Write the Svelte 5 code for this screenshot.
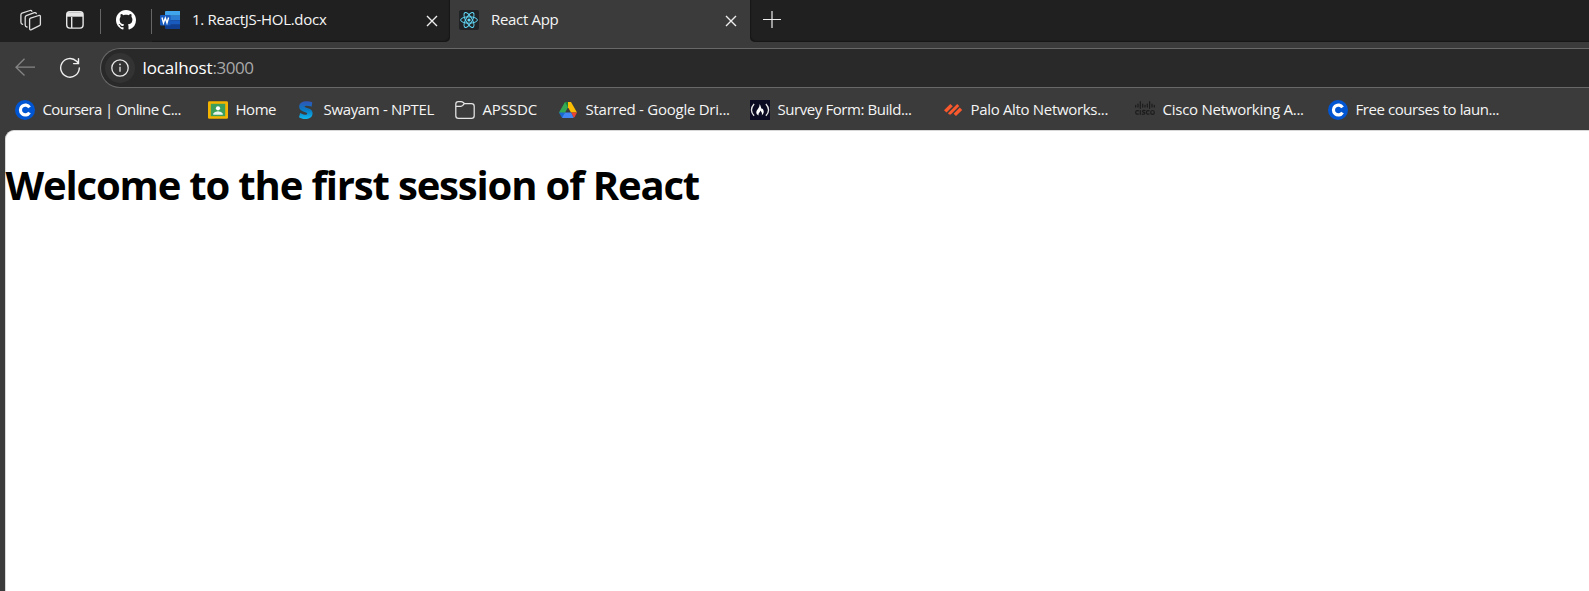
<script>
  const bookmarks = [
    { icon: 'coursera', label: 'Coursera | Online C...', slot: 193, text: 138.3 },
    { icon: 'classroom', label: 'Home', slot: 88, text: 40.5 },
    { icon: 'swayam', label: 'Swayam - NPTEL', slot: 159, text: 110.5 },
    { icon: 'folder', label: 'APSSDC', slot: 103, text: 54.5 },
    { icon: 'drive', label: 'Starred - Google Dri...', slot: 192, text: 144.3 },
    { icon: 'fcc', label: 'Survey Form: Build...', slot: 193, text: 134 },
    { icon: 'palo', label: 'Palo Alto Networks...', slot: 192, text: 137.5 },
    { icon: 'cisco', label: 'Cisco Networking A...', slot: 193, text: 141.3 },
    { icon: 'coursera', label: 'Free courses to laun...', slot: 193, text: 143.5 }
  ];

  // Tracks a label out or in so that it takes the given width.
  function fit(node, width) {
    const natural = node.getBoundingClientRect().width;
    node.style.letterSpacing = `${(width - natural) / node.textContent.length}px`;
  }
</script>

<div class="browser">
  <div class="tabstrip">
    <div class="pinned">
      <svg class="workspaces" width="24" height="24" viewBox="0 0 24 24" fill="none" stroke="#dedede" stroke-width="1.3" stroke-linejoin="round" stroke-linecap="round">
        <path d="M10.6 11.6Q10.6 10.5 11.6 10.1L19.8 7.5Q21.4 7.1 21.4 8.6V16.2Q21.4 17.3 20.4 17.7L12.4 21.6Q10.6 22.3 10.6 20.6Z" />
        <path d="M8 19Q6.2 18.6 6.2 17V9.3Q6.2 8.1 7.3 7.6L15.4 4.7Q16.8 4.3 17.3 5.6" />
        <path d="M3.6 16.4Q1.9 15.8 1.9 14.2V6.8Q1.9 5.6 3 5.1L11 2.5Q12.4 2.1 12.9 3.2" />
      </svg>
      <svg class="actions" width="20" height="20" viewBox="0 0 20 20" fill="none" stroke="#e6e6e6" stroke-width="1.4">
        <rect x="1.7" y="1.7" width="16.4" height="16.4" rx="3" />
        <path d="M2 4.5h16" stroke-width="4.4" />
        <path d="M6.7 7v11" />
      </svg>
    </div>
    <span class="divider"></span>
    <svg class="github" width="20" height="20" viewBox="0 0 16 16"><path fill="#fff" d="M8 0C3.58 0 0 3.58 0 8c0 3.54 2.29 6.53 5.47 7.59.4.07.55-.17.55-.38 0-.19-.01-.82-.01-1.49-2.01.37-2.53-.49-2.69-.94-.09-.23-.48-.94-.82-1.13-.28-.15-.68-.52-.01-.53.63-.01 1.08.58 1.23.82.72 1.21 1.87.87 2.33.66.07-.52.28-.87.51-1.07-1.78-.2-3.64-.89-3.64-3.95 0-.87.31-1.59.82-2.15-.08-.2-.36-1.02.08-2.12 0 0 .67-.21 2.2.82.64-.18 1.32-.27 2-.27s1.36.09 2 .27c1.53-1.04 2.2-.82 2.2-.82.44 1.1.16 1.92.08 2.12.51.56.82 1.27.82 2.15 0 3.07-1.87 3.75-3.65 3.95.29.25.54.73.54 1.48 0 1.07-.01 1.93-.01 2.2 0 .21.15.46.55.38A8.01 8.01 0 0 0 16 8c0-4.42-3.58-8-8-8Z" /></svg>
    <span class="divider"></span>
    <div class="tab word">
      <svg width="20" height="20" viewBox="0 0 20 20">
        <path fill="#41a5ee" d="M5 2Q5 1 6 1H20V5.7H5Z" />
        <path fill="#2b7cd3" d="M5 5.6H20V10.3H5Z" />
        <path fill="#185abd" d="M5 10.2H20V14.8H5Z" />
        <path fill="#103f91" d="M5 14.6H20V19H6Q5 19 5 18Z" />
        <rect y="5" width="10.6" height="10.4" rx="1" fill="#185abd" />
        <path d="m2 7.5 1.5 5.5L5.3 8 7 13 8.6 7.5" stroke="#fff" stroke-width="1.4" fill="none" />
      </svg>
      <span class="title"><span use:fit={134.5}>1. ReactJS-HOL.docx</span></span>
      <svg class="close" width="12" height="12" viewBox="0 0 12 12"><path d="m1 1 10 10M11 1 1 11" stroke="#eee" stroke-width="1.4" /></svg>
    </div>
    <div class="tab active">
      <svg width="20" height="20" viewBox="0 0 20 20" fill="none" stroke="#61dafb" stroke-width=".95">
        <rect width="20" height="20" rx="2" fill="#202225" stroke="none" />
        <ellipse cx="10" cy="10" rx="8.4" ry="3.2" />
        <ellipse cx="10" cy="10" rx="8.4" ry="3.2" transform="rotate(60 10 10)" />
        <ellipse cx="10" cy="10" rx="8.4" ry="3.2" transform="rotate(120 10 10)" />
        <circle cx="10" cy="10" r="1.6" fill="#61dafb" stroke="none" />
      </svg>
      <span class="title"><span use:fit={67.5}>React App</span></span>
      <svg class="close" width="12" height="12" viewBox="0 0 12 12"><path d="m1 1 10 10M11 1 1 11" stroke="#eee" stroke-width="1.4" /></svg>
    </div>
    <div class="rest">
      <svg width="18" height="18" viewBox="0 0 18 18"><path d="M9 0v17M0 8.5h18" stroke="#eee" stroke-width="1.2" /></svg>
    </div>
  </div>

  <div class="toolbar">
    <svg class="back" width="20" height="18" viewBox="0 0 20 18" fill="none" stroke="#858585" stroke-width="1.3"><path d="M20 9.2H1M9.5.7 1 9.2l8.5 8.3" /></svg>
    <svg class="reload" width="22" height="22" viewBox="0 0 22 22" fill="none" stroke="#f0f0f0" stroke-width="1.4" stroke-linecap="round"><path d="M20.3 11A9.3 9.3 0 1 1 17.6 4.3L19.4 6.2M19.5 1.8v4.8h-4.9" /></svg>
    <div class="address">
      <span class="info">
        <svg width="18" height="18" viewBox="0 0 18 18"><circle cx="9" cy="9" r="8.2" fill="none" stroke="#e8e8e8" stroke-width="1.3" /><path d="M9 7.8v5" stroke="#e8e8e8" stroke-width="1.3" /><circle cx="9" cy="5.4" r=".9" fill="#e8e8e8" /></svg>
      </span>
      <span class="url"><span use:fit={70}>localhost</span><span class="port" use:fit={41}>:3000</span></span>
    </div>
  </div>

  <div class="bookmarks">
    {#each bookmarks as b}
      <div class="bookmark" style:width="{b.slot}px">
        <svg width="20" height="20" viewBox="0 0 20 20">
          {#if b.icon === 'coursera'}
            <circle cx="10" cy="10" r="10" fill="#0056d2" />
            <path d="M14.5 7.4A4.9 4.9 0 1 0 14.5 12.6" fill="none" stroke="#fff" stroke-width="3.2" />
          {:else if b.icon === 'classroom'}
            <rect y="1.2" width="20" height="17.6" rx="1.3" fill="#f4b400" />
            <rect x="2.8" y="3.8" width="14.4" height="12.4" fill="#3d9f5b" />
            <circle cx="10" cy="8.3" r="2.1" fill="#fff" />
            <path d="M5.2 14.7V13.6Q6.4 11.4 10 11.3 13.6 11.4 14.8 13.6V14.7Z" fill="#e9f4ec" />
          {:else if b.icon === 'swayam'}
            <defs><linearGradient id="swayam" x2="0" y2="1"><stop stop-color="#3154b5" /><stop offset=".5" stop-color="#087cc5" /><stop offset="1" stop-color="#12b9ed" /></linearGradient></defs>
            <path d="M16.3 2.2 15.7 6.4Q9.5 5 8.6 6.2C8 8.2 16.8 7.3 16.6 13.3 16.4 20 7.2 20.3 3 17.3L4.2 12.9Q10.7 16.2 11.3 13.7C11.3 11.6 3.2 12.1 3.2 6.7 3.2 1.2 10.7.4 16.3 2.2Z" fill="url(#swayam)" />
          {:else if b.icon === 'folder'}
            <path d="M.8 5V4Q.8 1.5 3.3 1.5H6.2Q7.2 1.5 8 2.3L9.4 3.5H16.5Q19.2 3.5 19.2 6.2V15.8Q19.2 18.4 16.5 18.4H3.5Q.8 18.4 .8 15.8ZM.8 6.3H5.8Q7 6.3 7.8 5.4L9.4 3.5" fill="none" stroke="#e5e5e5" stroke-width="1.25" />
          {:else if b.icon === 'drive'}
            <path d="M7 2h6l-3 5.2-5.3 9.8L1 12.6Z" fill="#34a853" />
            <path d="M7 2h3v5.2Z" fill="#188038" />
            <path d="M10 2h3l6 10.5h-6L10 7.2Z" fill="#fbbc04" />
            <path d="M13.1 12.5H19L16.7 17 15.6 17.7Z" fill="#ea4335" />
            <path d="M6.9 12.5H13.1L15.6 17.7 15 18H5Q4.2 18 3.8 17.2Z" fill="#4285f4" />
            <path d="M1 12.5H6.9L4.1 17.4 3.5 17Z" fill="#1967d2" />
          {:else if b.icon === 'fcc'}
            <rect width="20" height="20" fill="#0a0a23" />
            <path d="M4.1 4Q-1.2 10 4.1 15.8M15.9 4Q21.2 10 15.9 15.8" fill="none" stroke="#e6e6e6" stroke-width="1.3" />
            <path d="M9.5 4C11 5.8 10.4 7 12 9.3L12.6 8.5C15 12.3 13 14.6 11.6 15.5 12.5 13.7 11.7 12.2 10.5 10.5 10.3 12.3 8 12.8 8.6 15.4 5.4 14 6 11.3 7.7 9.2 9.2 7.4 9.7 6.2 9.5 4Z" fill="#fff" />
          {:else if b.icon === 'palo'}
            <path d="M7.3 4 9.8 6.3 3.5 12.6 1 10.3ZM14.2 4 16.3 6 7.8 14.4 6 14.4 5 13.2ZM16.8 7.6 19.2 9.9 13 16 10.6 13.8Z" fill="#fa582d" />
          {:else}
            <g fill="none" stroke="#1c1c1c" stroke-width="1.2" stroke-linecap="round">
              <path d="M.7 5.3v1.8M3 4v3.1M5.3 1.5v6.8M7.7 4v3.1M10 5.3v1.8M12.3 4v3.1M14.6 1.5v6.8M17 4v3.1M19.3 5.3v1.8" />
              <path d="M3.5 10.9Q.8 9.9.7 12.4 .8 14.8 3.5 14M5.3 10.5v3.8M10 10.7Q7.4 10 7.5 11.4C7.6 12.6 9.9 12 9.9 13.2 9.9 14.6 8 14.2 7.2 14.1M14.1 10.9Q11.6 9.9 11.5 12.4 11.6 14.8 14.1 14" />
              <ellipse cx="17.5" cy="12.4" rx="1.8" ry="1.9" />
            </g>
          {/if}
        </svg>
        <span use:fit={b.text}>{b.label}</span>
      </div>
    {/each}
  </div>

  <main><h1><span use:fit={693.5}>Welcome to the first session of React</span></h1></main>
</div>

<style>
  :global(body) { margin: 0; background: #3b3b3b; }
  .browser {
    width: 100%; height: 591px; overflow: hidden; display: flex; flex-direction: column;
    background: #3b3b3b; color: #f5f5f5; font: 15px/20px "Open Sans", "Noto Sans", sans-serif; white-space: nowrap;
  }
  svg { display: block; flex: none; }
  .tabstrip { height: 42px; flex: none; display: flex; background: #3b3b3b; }
  .pinned { width: 100px; box-sizing: border-box; padding: 8px 0 0 19px; display: flex; gap: 22px; background: #202020; }
  .actions { margin-top: 2px; }
  .tabstrip > .divider { width: 1px; border: solid #202020; border-width: 9px 0 8px; background: #666; }
  .github { padding: 10px 15px 12px; background: #202020; }
  .tab { display: flex; align-items: flex-start; box-sizing: border-box; padding: 10px 12px 0 9px; }
  .word { width: 298px; background: #202020; border-bottom-right-radius: 5px; padding: 10px 12px 0 8px; box-shadow: inset -1px -1px 1px #171717; }
  .active { width: 300px; border-radius: 5px 5px 0 0; }
  .title { flex: 1; margin-top: -1px; padding-left: 12px; }
  .close { margin-top: 5px; }
  .rest { flex: 1; padding: 11px 0 0 13px; background: #202020; border-bottom-left-radius: 5px; box-shadow: inset 1px -1px 1px #171717; }
  .active .close { margin-right: 1px; }
  .toolbar { height: 46px; flex: none; display: flex; align-items: flex-start; padding: 6px 0 0 15px; box-sizing: border-box; }
  .back { margin: 10px 0 0; }
  .reload { margin: 9px 0 0 24px; }
  .address {
    flex: 1; height: 40px; box-sizing: border-box; margin-left: 19px; border: 1px solid #686868; border-right: 0;
    border-radius: 20px 0 0 20px; background: #292929; display: flex; align-items: center; padding-left: 4px;
  }
  .info { width: 30px; height: 30px; border-radius: 50%; background: #333; display: grid; place-items: center; }
  .url { margin-left: 7.5px; font-size: 17px; color: #fff; }
  .port { color: #a8a8a8; }
  .bookmarks { height: 42px; flex: none; display: flex; align-items: center; padding: 2px 0 0 15px; box-sizing: border-box; }
  .bookmark { flex: none; display: flex; align-items: center; gap: 7.5px; }
  .bookmark > span { flex: none; margin-top: -2px; }
  main { flex: 1; margin-left: 5px; box-sizing: border-box; border: solid #d8d8d8; border-width: 1px 0 0 1px; border-top-left-radius: 9px; background: #fff; color: #000; }
  h1 { margin: 27px 0 0 -.5px; font-size: 40px; line-height: 54px; font-weight: 700; }
</style>
